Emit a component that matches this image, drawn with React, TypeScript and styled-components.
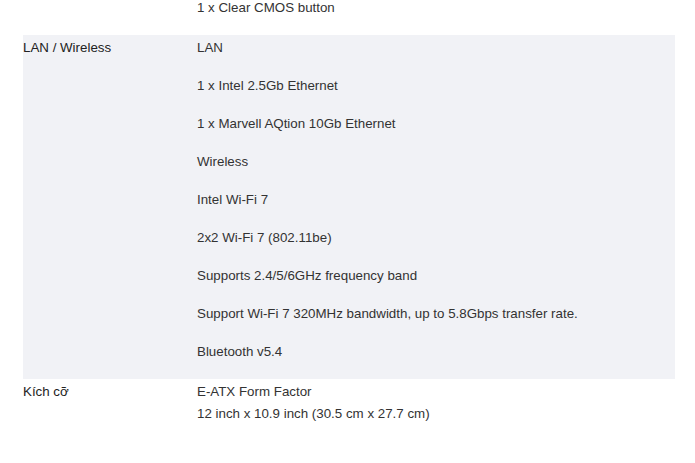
import React from "react";
import styled, { createGlobalStyle } from "styled-components";

interface ISpecRow {
  label: string;
  values: string[][];
}

const specs: ISpecRow[] = [
  { label: "", values: [["1 x Clear CMOS button"]] },
  {
    label: "LAN / Wireless",
    values: [
      ["LAN"],
      ["1 x Intel 2.5Gb Ethernet"],
      ["1 x Marvell AQtion 10Gb Ethernet"],
      ["Wireless"],
      ["Intel Wi-Fi 7"],
      ["2x2 Wi-Fi 7 (802.11be)"],
      ["Supports 2.4/5/6GHz frequency band"],
      ["Support Wi-Fi 7 320MHz bandwidth, up to 5.8Gbps transfer rate."],
      ["Bluetooth v5.4"],
    ],
  },
  {
    label: "Kích cỡ",
    values: [["E-ATX Form Factor", "12 inch x 10.9 inch (30.5 cm x 27.7 cm)"]],
  },
];

const App: React.FC = () => {
  return (
    <>
      <GlobalStyle />
      <Page>
        <SpecTable>
          <tbody>
            {specs.map((row, i) => (
              <Row key={i} $shaded={i % 2 === 1}>
                <Label>{row.label}</Label>
                <Value>
                  {row.values.map((lines, j) => (
                    <Para key={j}>
                      {lines.map((l, k) => (
                        <React.Fragment key={k}>
                          {k > 0 && <br />}
                          {l}
                        </React.Fragment>
                      ))}
                    </Para>
                  ))}
                </Value>
              </Row>
            ))}
          </tbody>
        </SpecTable>
      </Page>
    </>
  );
};

export default App;

const GlobalStyle = createGlobalStyle`
  html, body {
    margin: 0;
    padding: 0;
    background: #fff;
    overflow: hidden;
  }
  body {
    font-family: "Liberation Sans", Arial, sans-serif;
    font-size: 13.33px;
    color: #333;
  }
`;

const Page = styled.div`
  width: 695px;
  height: 463px;
  padding: 0 20px 0 23px;
  box-sizing: border-box;
  margin-top: -5px;
`;

const SpecTable = styled.table`
  width: 652px;
  border-collapse: collapse;
  border-spacing: 0;
`;

const Row = styled.tr<{ $shaded: boolean }>`
  background: ${(props) => (props.$shaded ? "#f1f2f6" : "transparent")};
`;

const Label = styled.td`
  width: 174px;
  padding: 2px 0 0;
  vertical-align: top;
  color: #222;
  line-height: 22px;
`;

const Value = styled.td`
  padding: 2px 0 0;
  vertical-align: top;
  color: #333;
`;

const Para = styled.p`
  margin: 0 0 16px;
  line-height: 22px;
`;
